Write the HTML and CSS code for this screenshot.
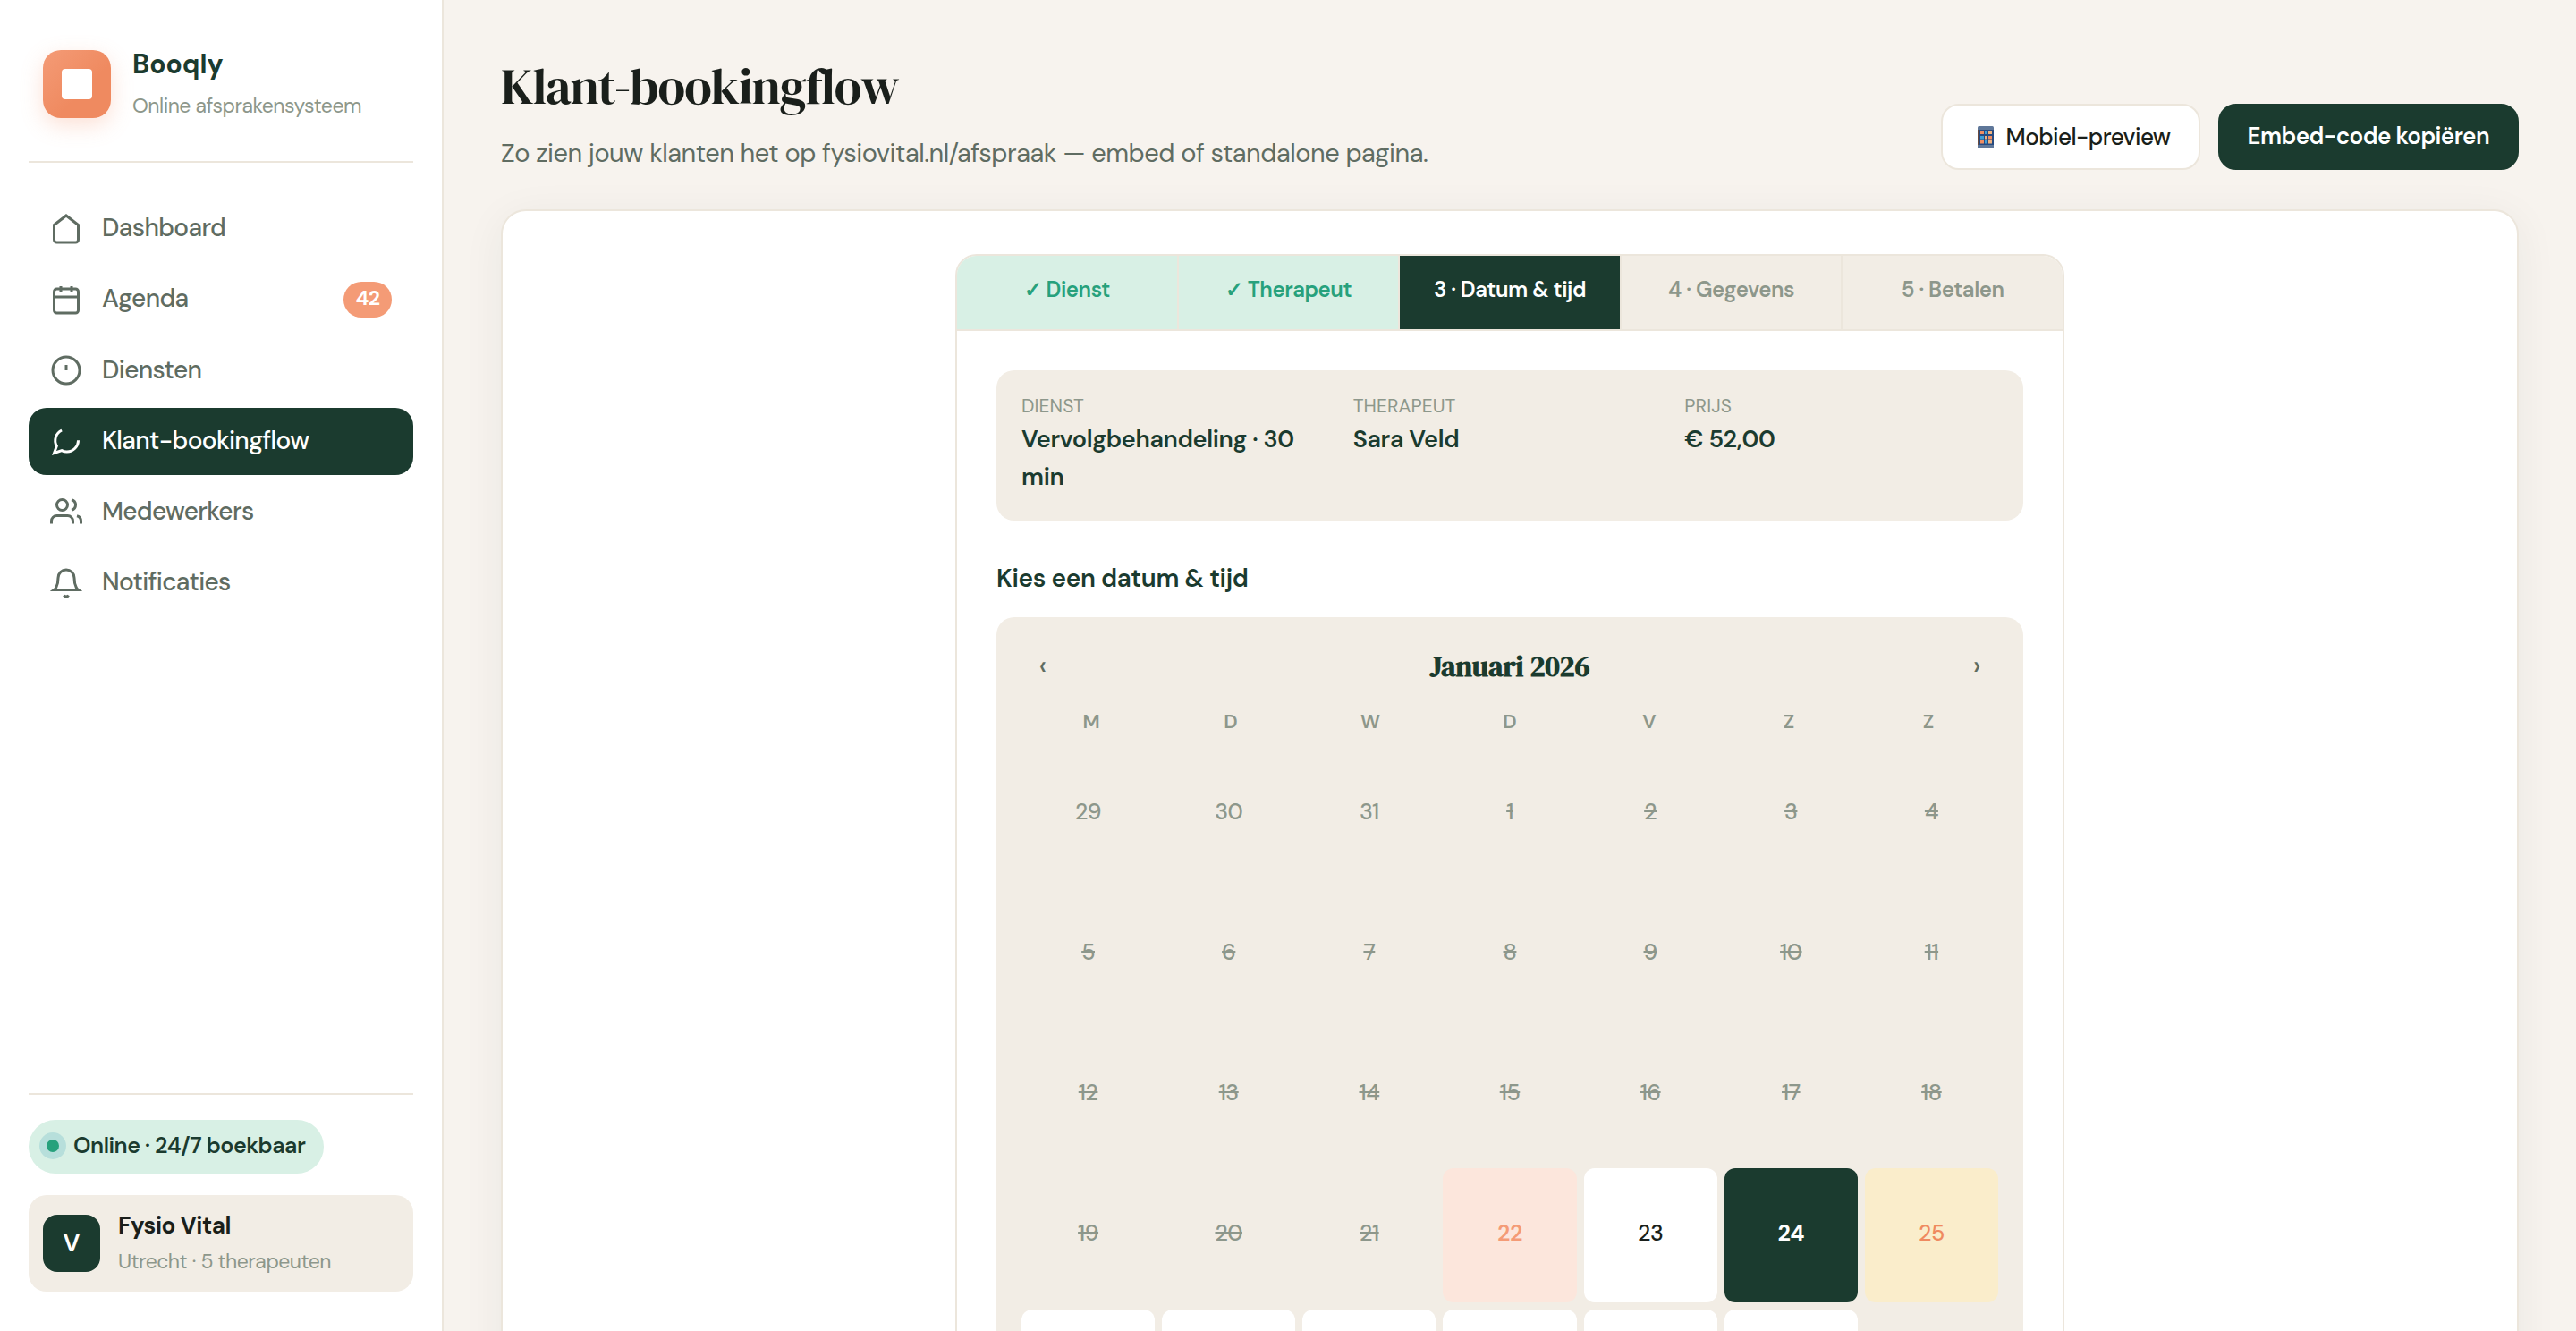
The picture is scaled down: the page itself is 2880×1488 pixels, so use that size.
FILE: index.html
```html
<!doctype html>
<html lang="nl">
    <head>
        <meta charset="UTF-8" />
        <meta name="viewport" content="width=device-width, initial-scale=1.0" />
        <title>Booqly - Klant-bookingflow</title>
        <link rel="stylesheet" href="styles.css">
    </head>
    <body>
        <div class="app">
            <aside class="sidebar">
                <div class="brand">
                    <div class="logo"></div>
                    <div>
                        <div class="brand-name">Booqly</div>
                        <div class="brand-sub">Online afsprakensysteem</div>
                    </div>
                </div>

                <nav class="nav">
                    <a class="nav-item">
                        <svg viewBox="0 0 24 24"><path d="M3 9l9-7 9 7v11a2 2 0 0 1-2 2H5a2 2 0 0 1-2-2z" /></svg>
                        Dashboard
                    </a>
                    <a class="nav-item">
                        <svg viewBox="0 0 24 24"><rect x="3" y="4" width="18" height="18" rx="2" /><path d="M3 10h18M8 2v4M16 2v4" /></svg>
                        Agenda
                        <span class="badge">42</span>
                    </a>
                    <a class="nav-item">
                        <svg viewBox="0 0 24 24"><circle cx="12" cy="12" r="10" /><path d="M12 8v4" /></svg>
                        Diensten
                    </a>
                    <a class="nav-item active">
                        <svg viewBox="0 0 24 24"><path d="M21 11.5a8.5 8.5 0 0 1-8.5 8.5c-1.4 0-2.7-.3-3.8-.9L3 21l1.9-5.2A8.5 8.5 0 0 1 8.7 4" /></svg>
                        Klant-bookingflow
                    </a>
                    <a class="nav-item">
                        <svg viewBox="0 0 24 24"><path d="M17 21v-2a4 4 0 0 0-4-4H5a4 4 0 0 0-4 4v2" /><circle cx="9" cy="7" r="4" /><path d="M23 21v-2a4 4 0 0 0-3-3.87M16 3.13a4 4 0 0 1 0 7.75" /></svg>
                        Medewerkers
                    </a>
                    <a class="nav-item">
                        <svg viewBox="0 0 24 24"><path d="M18 8A6 6 0 0 0 6 8c0 7-3 9-3 9h18s-3-2-3-9M13.73 21a2 2 0 0 1-3.46 0" /></svg>
                        Notificaties
                    </a>
                </nav>

                <div class="sidebar-foot">
                    <div class="status"><span class="dot"></span>Online · 24/7 boekbaar</div>
                    <div class="account">
                        <div class="avatar">V</div>
                        <div>
                            <div class="account-name">Fysio Vital</div>
                            <div class="account-sub">Utrecht · 5 therapeuten</div>
                        </div>
                    </div>
                </div>
            </aside>

            <main class="main">
                <header class="page-head">
                    <div>
                        <h1>Klant-bookingflow</h1>
                        <p>Zo zien jouw klanten het op fysiovital.nl/afspraak — embed of standalone pagina.</p>
                    </div>
                    <div class="actions">
                        <button class="btn">
                            <svg class="phone" viewBox="0 0 18 25">
                                <rect width="18" height="25" rx="1.5" fill="#5f7799" />
                                <rect y="4" width="18" height="17" fill="#274a80" />
                                <rect y="4" width="1.5" height="17" fill="#6b4a3e" />
                                <g fill="#f08d62"><rect x="3" y="5" width="4" height="4" /><rect x="12" y="11" width="4" height="3.500" /><rect x="3" y="16" width="4" height="3.500" /></g>
                                <g fill="#3f9fd6"><rect x="8" y="5" width="3" height="4" /><rect x="3" y="11" width="4" height="3.500" /><rect x="8" y="16" width="3" height="3.500" /></g>
                                <g fill="#efb27e"><rect x="12" y="5" width="4" height="4" /><rect x="8" y="11" width="3" height="3.500" /><rect x="12" y="16" width="4" height="3.500" /></g>
                            </svg>
                            Mobiel-preview
                        </button>
                        <button class="btn primary">Embed-code kopiëren</button>
                    </div>
                </header>

                <section class="card">
                    <div class="widget">
                        <div class="steps">
                            <div class="step done">✓ Dienst</div>
                            <div class="step done">✓ Therapeut</div>
                            <div class="step current">3 · Datum &amp; tijd</div>
                            <div class="step">4 · Gegevens</div>
                            <div class="step">5 · Betalen</div>
                        </div>
                        <div class="widget-body">
                            <div class="summary">
                                <div><span>Dienst</span><strong>Vervolgbehandeling · 30 min</strong></div>
                                <div><span>Therapeut</span><strong>Sara Veld</strong></div>
                                <div><span>Prijs</span><strong>€ 52,00</strong></div>
                            </div>

                            <h2>Kies een datum &amp; tijd</h2>

                            <div class="calendar">
                                <div class="cal-head">
                                    <button class="cal-nav">‹</button>
                                    <div class="cal-title">Januari 2026</div>
                                    <button class="cal-nav">›</button>
                                </div>
                                <div class="weekdays">
                                    <span>M</span><span>D</span><span>W</span><span>D</span><span>V</span><span>Z</span><span>Z</span>
                                </div>
                                <div class="days">
                                    <div class="day other">29</div>
                                    <div class="day other">30</div>
                                    <div class="day other">31</div>
                                    <div class="day past">1</div>
                                    <div class="day past">2</div>
                                    <div class="day past">3</div>
                                    <div class="day past">4</div>
                                    <div class="day past">5</div>
                                    <div class="day past">6</div>
                                    <div class="day past">7</div>
                                    <div class="day past">8</div>
                                    <div class="day past">9</div>
                                    <div class="day past">10</div>
                                    <div class="day past">11</div>
                                    <div class="day past">12</div>
                                    <div class="day past">13</div>
                                    <div class="day past">14</div>
                                    <div class="day past">15</div>
                                    <div class="day past">16</div>
                                    <div class="day past">17</div>
                                    <div class="day past">18</div>
                                    <div class="day past">19</div>
                                    <div class="day past">20</div>
                                    <div class="day past">21</div>
                                    <div class="day today">22</div>
                                    <div class="day">23</div>
                                    <div class="day selected">24</div>
                                    <div class="day limited">25</div>
                                    <div class="day"></div>
                                    <div class="day"></div>
                                    <div class="day"></div>
                                    <div class="day"></div>
                                    <div class="day"></div>
                                    <div class="day"></div>
                                </div>
                            </div>
                        </div>
                    </div>
                </section>
            </main>
        </div>
    </body>
</html>
```
FILE: styles.css
```css
* {
    box-sizing: border-box;
    margin: 0;
    padding: 0;
}
:root {
    --green: #1b3b2f;
    --ink: #1a1f1b;
    --text: #5f6c62;
    --muted: #8d978b;
    --mint: #d8f0e5;
    --sand: #f2ede5;
    --line: #ece6dc;
    --orange: #f49b76;
}
body {
    font-family: "DM Sans", sans-serif;
    font-size: 28px;
    line-height: 1.6;
    color: var(--ink);
    background: #f7f3ee;
    height: 1488px;
    overflow: hidden;
}
button {
    font-family: inherit;
    cursor: pointer;
}
.app {
    display: flex;
    height: 1488px;
    overflow: hidden;
}

/* Sidebar */
.sidebar {
    width: 496px;
    flex-shrink: 0;
    background: #fff;
    border-right: 2px solid var(--line);
    padding: 48px 32px 44px;
    display: flex;
    flex-direction: column;
}
.brand {
    display: flex;
    align-items: center;
    gap: 24px;
    height: 134px;
    padding: 0 16px 44px;
    border-bottom: 2px solid var(--line);
}
.logo {
    width: 76px;
    height: 76px;
    border-radius: 20px;
    background: linear-gradient(135deg, var(--orange), #ef8a60 60%);
    box-shadow: 0 8px 24px rgba(244, 155, 118, 0.3);
    display: flex;
    align-items: center;
    justify-content: center;
    margin-top: 4px;
}
.logo::after {
    content: "";
    width: 34px;
    height: 34px;
    border-radius: 4px;
    background: #fff;
}
.brand-name {
    font-size: 30px;
    font-weight: 700;
    color: var(--green);
    line-height: 48px;
}
.brand-sub {
    font-size: 23px;
    letter-spacing: -0.5px;
    color: var(--muted);
    line-height: 36px;
    margin-top: 4px;
}
.nav {
    display: flex;
    flex-direction: column;
    gap: 4px;
    margin-top: 36px;
}
.nav-item {
    display: flex;
    align-items: center;
    gap: 22px;
    height: 75.2px;
    padding: 0 24px;
    border-radius: 20px;
    font-size: 28px;
    letter-spacing: -0.65px;
    font-weight: 500;
    color: var(--text);
}
.nav-item svg {
    width: 36px;
    height: 36px;
    fill: none;
    stroke: currentColor;
    stroke-width: 2;
}
.nav-item.active {
    background: var(--green);
    color: #fff;
}
.badge {
    margin-left: auto;
    width: 54px;
    height: 40px;
    line-height: 37px;
    text-align: center;
    border-radius: 20px;
    background: var(--orange);
    color: #fff;
    font-size: 23px;
    letter-spacing: -0.5px;
    font-weight: 700;
}
.sidebar-foot {
    margin-top: auto;
    border-top: 2px solid var(--line);
    padding-top: 28px;
}
.status {
    display: inline-flex;
    align-items: center;
    gap: 16px;
    height: 60px;
    padding: 0 21px 2px 20px;
    border-radius: 30px;
    background: var(--mint);
    color: var(--green);
    font-size: 25px;
    letter-spacing: -0.5px;
    font-weight: 600;
}
.dot {
    width: 14px;
    height: 14px;
    border-radius: 50%;
    background: #27a17c;
    box-shadow: 0 0 0 8px #b7dfdb;
}
.account {
    display: flex;
    align-items: center;
    gap: 20px;
    height: 108px;
    margin-top: 24px;
    padding: 0 16px;
    border-radius: 20px;
    background: var(--sand);
}
.avatar {
    width: 64px;
    height: 64px;
    border-radius: 16px;
    background: var(--green);
    color: #fff;
    font-weight: 600;
    text-align: center;
    line-height: 64px;
}
.account-name {
    font-size: 26px;
    letter-spacing: -0.5px;
    font-weight: 700;
    line-height: 42px;
    margin-top: -3px;
}
.account-sub {
    font-size: 23px;
    letter-spacing: -0.5px;
    color: var(--muted);
    line-height: 38px;
}

/* Main */
.main {
    flex: 1;
    padding: 56px 64px 0;
}
.page-head {
    display: flex;
    justify-content: space-between;
    align-items: flex-end;
    height: 134px;
    margin-bottom: 44px;
}
h1 {
    font-family: "DM Serif Display", "Liberation Serif", serif;
    font-size: 56px;
    font-weight: 400;
    line-height: 84px;
    letter-spacing: -0.02em;
}
.page-head p {
    font-size: 29px;
    letter-spacing: -0.48px;
    color: var(--text);
    line-height: 45px;
    margin: 10px 0 -4px;
}
.actions {
    display: flex;
    gap: 20px;
}
.btn {
    display: flex;
    align-items: center;
    height: 74px;
    padding: 0 31px;
    border: 2px solid var(--line);
    border-radius: 20px;
    background: #fff;
    color: var(--ink);
    font-size: 26px;
    letter-spacing: -0.6px;
    font-weight: 500;
}
.btn.primary {
    background: var(--green);
    border-color: var(--green);
    color: #fff;
    font-weight: 600;
    padding-bottom: 3px;
}
.phone {
    width: 18px;
    height: 25px;
    margin: 0 14px 0 8px;
}
.card {
    height: 1600px;
    padding: 48px;
    border: 2px solid var(--line);
    border-radius: 28px;
    background: #fff;
    box-shadow: 0 8px 48px rgba(27, 59, 47, 0.06);
}
.widget {
    width: 1240px;
    margin: 0 auto;
    border: 2px solid var(--line);
    border-radius: 24px;
    overflow: hidden;
}
.steps {
    display: flex;
    background: var(--sand);
    border-bottom: 2px solid var(--line);
}
.step {
    flex: 1;
    height: 82px;
    line-height: 76px;
    text-align: center;
    font-size: 24px;
    letter-spacing: -0.45px;
    font-weight: 600;
    color: var(--muted);
    border-right: 2px solid var(--line);
}
.step:last-child {
    border-right: none;
}
.step.done {
    background: var(--mint);
    color: #27a17c;
}
.step.current {
    background: var(--green);
    color: #fff;
}
.widget-body {
    padding: 44px;
}
.summary {
    display: grid;
    grid-template-columns: repeat(3, 1fr);
    gap: 20px;
    height: 168px;
    padding: 24px 28px;
    border-radius: 20px;
    background: var(--sand);
}
.summary span {
    display: block;
    font-size: 21px;
    line-height: 32px;
    letter-spacing: 0.1px;
    text-transform: uppercase;
    color: var(--muted);
}
.summary strong {
    display: block;
    font-size: 27px;
    letter-spacing: -0.35px;
    font-weight: 600;
    line-height: 42px;
    color: var(--green);
}
h2 {
    font-size: 28px;
    letter-spacing: -0.33px;
    font-weight: 600;
    line-height: 45px;
    color: var(--green);
    margin: 42px 0 21px;
}
.calendar {
    padding: 28px;
    border-radius: 20px;
    background: var(--sand);
}
.cal-head {
    display: flex;
    justify-content: space-between;
    align-items: center;
    height: 56px;
}
.cal-title {
    font-family: "DM Serif Display", "Liberation Serif", serif;
    font-size: 32px;
    font-weight: 700;
    color: var(--green);
}
.cal-nav {
    width: 48px;
    padding-bottom: 3px;
    border: none;
    background: none;
    font-size: 30px;
    font-weight: 500;
    color: var(--text);
}
.weekdays {
    display: grid;
    grid-template-columns: repeat(7, 1fr);
    margin-top: 14px;
    height: 47px;
    line-height: 38px;
    text-align: center;
    font-size: 22px;
    font-weight: 600;
    color: var(--muted);
}
.days {
    display: grid;
    grid-template-columns: repeat(7, 1fr);
    gap: 8px;
}
.day {
    display: flex;
    align-items: center;
    justify-content: center;
    aspect-ratio: 1;
    padding-bottom: 3px;
    border-radius: 12px;
    background: #fff;
    font-size: 25px;
    letter-spacing: -0.5px;
    font-weight: 500;
    line-height: 40px;
}
.day.other,
.day.past {
    background: none;
    color: var(--muted);
}
.day.past {
    text-decoration: line-through;
}
.day.today {
    background: #fce6dc;
    color: var(--orange);
    font-weight: 600;
}
.day.selected {
    background: var(--green);
    color: #fff;
    font-weight: 700;
}
.day.limited {
    background: #faedcb;
    color: #ef8a60;
}
```
